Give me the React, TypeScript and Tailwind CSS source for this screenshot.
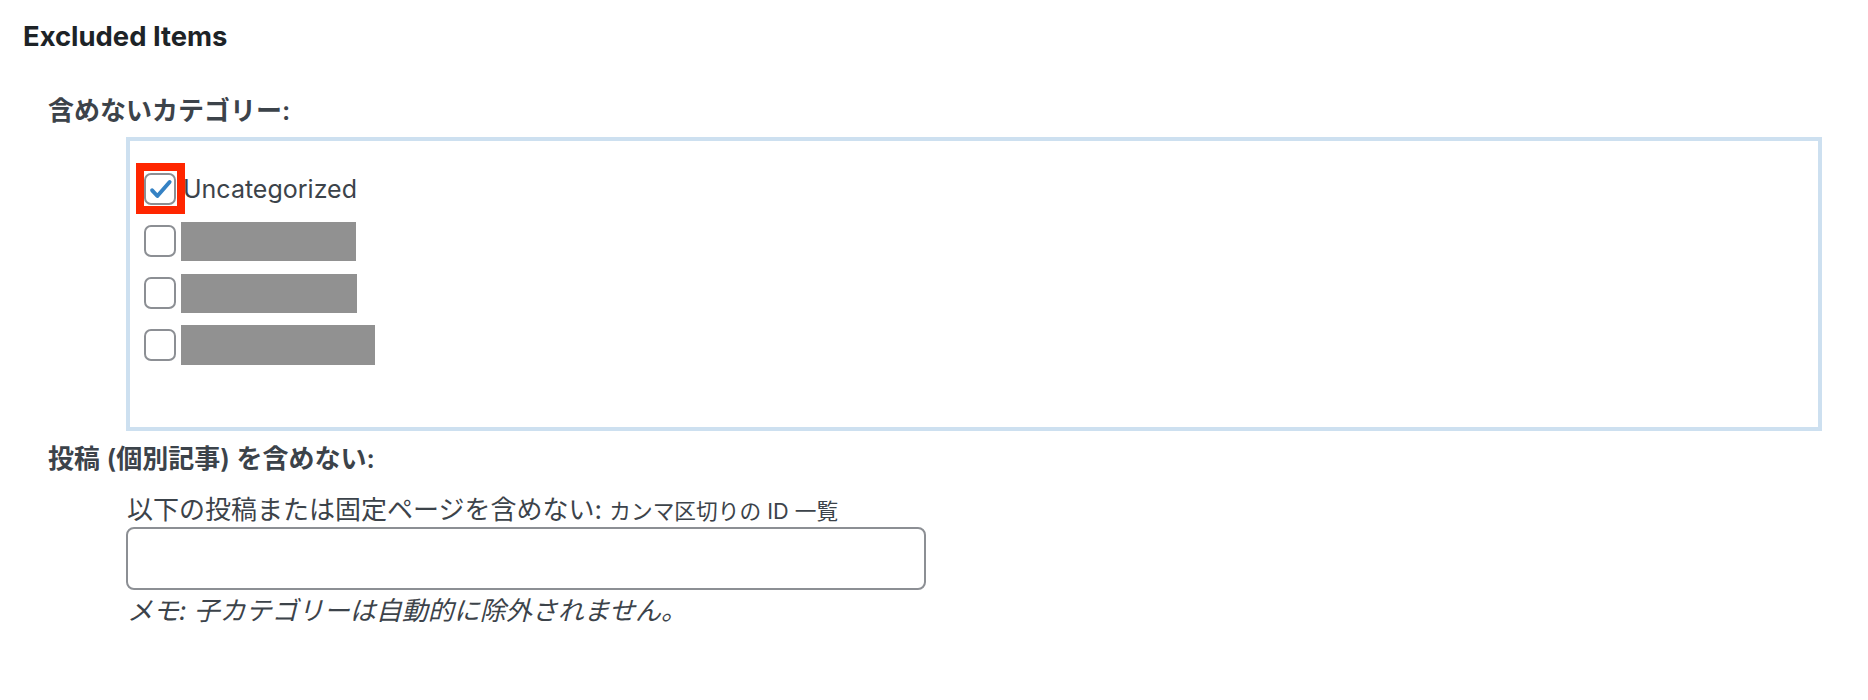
import React from 'react';

const FONT = "font-['Inter','Noto_Sans_CJK_JP',sans-serif]";

const Checkbox = ({ checked = false }: { checked?: boolean }) => (
  <span className="w-[32px] h-[32px] shrink-0 rounded-[7px] border-2 border-[#8c8f94] bg-white flex items-center justify-center">
    {checked && (
      <svg width="28" height="28" viewBox="0 0 32 32" className="-ml-[1px]">
        <path d="M7 17.5 L13 24 L27 8" fill="none" stroke="#3582c4" strokeWidth="4.5" strokeLinecap="round" strokeLinejoin="round" />
      </svg>
    )}
  </span>
);

const hidden = [
  { w: 'w-[175px]', h: 'h-[39px]' },
  { w: 'w-[176px]', h: 'h-[39px]' },
  { w: 'w-[194px]', h: 'h-[40px]' },
];

export default function App() {
  return (
    <div className={`${FONT} bg-white w-full h-[700px] pt-[20px] text-[#3c434a]`}>
      <h2 className="ml-[23px] text-[27.4px] leading-[32px] font-bold text-[#1d2327]">Excluded Items</h2>

      <div className="ml-[48px] mt-[43px] text-[26px] leading-[32px] font-semibold">含めないカテゴリー:</div>

      <div className="ml-[126px] mr-[46px] mt-[10px] h-[294px] border-4 border-[#cde0f0] pt-[22px] pl-[14px]">
        <ul>
          <li className="h-[52px] flex items-center">
            <span className="relative">
              <Checkbox checked />
              <span className="absolute left-[-8px] top-[-10px] w-[49px] h-[51px] border-[8px] border-[#ff2600]" />
            </span>
            <span className="ml-[7px] text-[25px] leading-[32px]">Uncategorized</span>
          </li>
          {hidden.map((b, i) => (
            <li key={i} className="h-[52px] flex items-center">
              <Checkbox />
              <span className={`ml-[5px] ${b.w} ${b.h} bg-[#919191]`} />
            </li>
          ))}
        </ul>
      </div>

      <div className="ml-[48px] mt-[12px] text-[26px] leading-[32px] font-semibold">投稿 (個別記事) を含めない:</div>

      <div className="ml-[127px] mt-[19px]">
        <div className="text-[26px] leading-[32px]">
          以下の投稿または固定ページを含めない: <span className="text-[21.7px]">カンマ区切りの ID 一覧</span>
        </div>
        <input
          type="text"
          className="block -ml-[1px] w-[800px] h-[63px] rounded-[8px] border-2 border-[#8c8f94] bg-white outline-none"
        />
        <p className="mt-[5px] text-[26px] leading-[32px] italic">メモ: 子カテゴリーは自動的に除外されません。</p>
      </div>
    </div>
  );
}
